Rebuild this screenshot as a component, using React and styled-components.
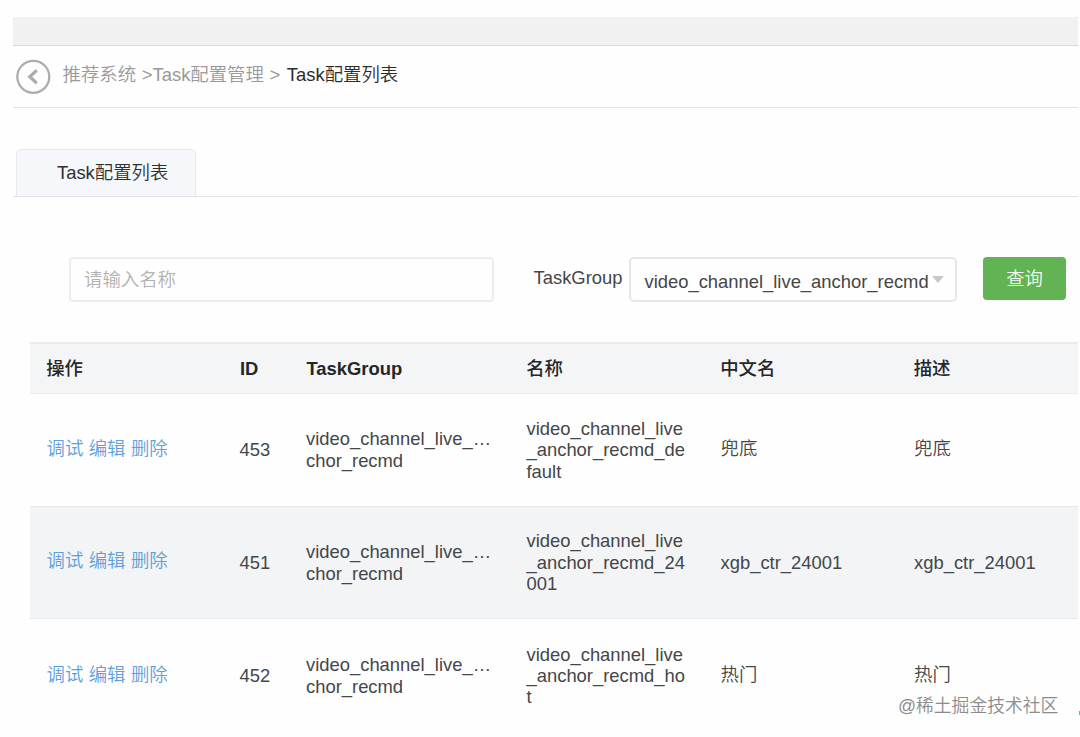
import React from "react";
import styled, { createGlobalStyle } from "styled-components";

const GlobalStyle = createGlobalStyle`
  * { box-sizing: border-box; }
  body {
    margin: 0;
    background: #fefefe;
    color: #444648;
    font-family: "Liberation Sans", "Noto Sans CJK SC", sans-serif;
    font-size: 18.4px;
    line-height: 21.4px;
    font-weight: 350;
    overflow: hidden;
  }
`;

const Page = styled.div`
  position: relative;
  height: 737px;
  padding: 17px 2px 0 13px;
  overflow: hidden;
`;

const TopBar = styled.div`
  height: 29px;
  background: #f1f1f1;
  border-bottom: 1px solid #d9d9d9;
`;

const Crumbs = styled.nav`
  display: flex;
  align-items: flex-start;
  height: 62px;
  padding: 13px 0 0 3px;
  border-bottom: 1px solid #e4e4e4;
  color: #999;
`;

const BackIcon = styled.svg`
  width: 35px;
  height: 35px;
  margin-right: 11.5px;
`;

const CrumbText = styled.div`
  padding-top: 5px;
  white-space: pre;
  word-spacing: 0.6px;
`;

const Current = styled.span`
  color: #2c2c2c;
  margin-left: 0.8px;
`;

const TabBar = styled.div`
  display: flex;
  align-items: flex-end;
  height: 89px;
  padding-left: 3px;
  border-bottom: 1px solid #e2e5e8;
`;

const Tab = styled.div`
  width: 180px;
  height: 47.5px;
  padding: 12.5px 0 0 40px;
  border: 1px solid #e6e9ec;
  border-bottom: 0;
  border-radius: 5px 5px 0 0;
  background: #f5f7fa;
  color: #2f3031;
`;

const Filters = styled.div`
  display: flex;
  align-items: flex-start;
  margin: 60px 12px 0 56px;
`;

const Input = styled.input`
  width: 425px;
  height: 45px;
  padding: 0 13px;
  border: 2px solid #ededed;
  border-radius: 4px;
  background: transparent;
  font: inherit;
  outline: 0;
  &::placeholder { color: #b2b2b2; opacity: 1; }
`;

const Label = styled.label`
  width: 96px;
  margin-left: 40px;
  padding-top: 10px;
`;

const Select = styled.div`
  display: flex;
  align-items: center;
  width: 328px;
  height: 45px;
  padding: 4px 0 0 13px;
  border: 2px solid #e6e6e6;
  border-radius: 5px;
`;

const Caret = styled.span`
  margin: -4px 0 0 3px;
  border: 6px solid transparent;
  border-top: 7px solid #c8c8c8;
  border-bottom: 0;
`;

const Button = styled.button`
  width: 83px;
  height: 43px;
  margin-left: 26px;
  padding: 0;
  border: 0;
  border-radius: 4px;
  background: #61b354;
  color: #f2faf0;
  font: inherit;
`;

const Table = styled.div`
  margin: 40px 0 0 17px;
`;

const columns = "193px 66.5px 220.5px 194px 193.5px 1fr";

const HeadRow = styled.div`
  display: grid;
  grid-template-columns: ${columns};
  align-items: center;
  height: 52px;
  padding-left: 17px;
  background: #f3f5f7;
  border: 0 solid #e9ebed;
  border-width: 2px 0 1px;
  color: #252628;
`;

const HeadCell = styled.div`
  font-weight: ${(p) => (p.$cjk ? 500 : 700)};
  margin-left: ${(p) => (p.$cjk ? "-0.8px" : "0")};
`;

const Row = styled.div`
  display: grid;
  grid-template-columns: ${columns};
  align-items: center;
  height: 112.7px;
  padding-left: 17px;
  background: ${(p) => (p.$striped ? "#f2f4f5" : "transparent")};
  border-bottom: ${(p) => (p.$last ? "0" : "1px solid #e6e8ea")};
`;

const Cell = styled.div`
  white-space: pre;
  margin-left: -0.5px;
  padding-bottom: ${(p) => (p.$cjk ? "3px" : "0")};
`;

const Actions = styled.div`
  display: flex;
  gap: 5.4px;
  margin-left: -0.5px;
  padding-bottom: 3px;
`;

const Action = styled.a`
  color: #5f9fda;
`;

const Stamp = styled.div`
  position: absolute;
  left: 898px;
  top: 696px;
  color: #8c8c8c;
  font-size: 17.8px;
  white-space: nowrap;
`;

const Speck = styled.i`
  position: absolute;
  left: 1079px;
  top: 711px;
  width: 1px;
  height: 4px;
  background: #7fa79c;
`;

const Mark = styled.div`
  position: absolute;
  left: ${(p) => p.$x}px;
  top: ${(p) => p.$y}px;
  transform: rotate(-28deg);
  transform-origin: 0 100%;
  color: rgba(0, 0, 0, 0.014);
  font-size: 46px;
  line-height: 40px;
  pointer-events: none;
`;

const marks = [
  { x: 273, y: 72, text: "boxion" },
  { x: 803, y: 72, text: "boxion" },
  { x: 273, y: 338, text: "boxiongdong" },
  { x: 803, y: 338, text: "boxiongdong" },
  { x: 273, y: 606, text: "boxiongdong" },
  { x: 803, y: 606, text: "boxiongdong" },
];

const headings = ["操作", "ID", "TaskGroup", "名称", "中文名", "描述"];

const rows = [
  { id: "453", name: "video_channel_live\n_anchor_recmd_de\nfault", label: "兜底" },
  { id: "451", name: "video_channel_live\n_anchor_recmd_24\n001", label: "xgb_ctr_24001" },
  { id: "452", name: "video_channel_live\n_anchor_recmd_ho\nt", label: "热门" },
];

const isCjk = (text) => /[\u4e00-\u9fff]/.test(text);

export default function App() {
  return (
    <Page>
      <GlobalStyle />
      <TopBar />
      <Crumbs>
        <BackIcon viewBox="0 0 35 35" fill="none" stroke="#adadad">
          <circle cx="17.3" cy="17.8" r="16" strokeWidth="2.3" />
          <path d="M20.8 11.3 13.7 17.8l7.1 6.5" strokeWidth="3.2" />
        </BackIcon>
        <CrumbText>
          推荐系统 &gt;Task配置管理 &gt; <Current>Task配置列表</Current>
        </CrumbText>
      </Crumbs>
      <TabBar>
        <Tab>Task配置列表</Tab>
      </TabBar>
      <Filters>
        <Input placeholder="请输入名称" />
        <Label>TaskGroup</Label>
        <Select>
          video_channel_live_anchor_recmd
          <Caret />
        </Select>
        <Button>查询</Button>
      </Filters>
      <Table>
        <HeadRow>
          {headings.map((h) => (
            <HeadCell key={h} $cjk={isCjk(h)}>{h}</HeadCell>
          ))}
        </HeadRow>
        {rows.map((r, i) => (
          <Row key={r.id} $striped={i === 1} $last={i === rows.length - 1}>
            <Actions>
              <Action>调试</Action>
              <Action>编辑</Action>
              <Action>删除</Action>
            </Actions>
            <Cell>{r.id}</Cell>
            <Cell>{"video_channel_live_…\nchor_recmd"}</Cell>
            <Cell>{r.name}</Cell>
            <Cell $cjk={isCjk(r.label)}>{r.label}</Cell>
            <Cell $cjk={isCjk(r.label)}>{r.label}</Cell>
          </Row>
        ))}
      </Table>
      {marks.map((m) => (
        <Mark key={`${m.x}-${m.y}`} $x={m.x} $y={m.y}>{m.text}</Mark>
      ))}
      <Stamp>@稀土掘金技术社区</Stamp>
      <Speck />
    </Page>
  );
}
